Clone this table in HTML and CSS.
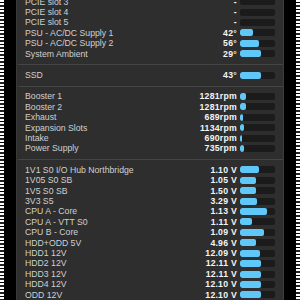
FILE: index.html
```html
<!DOCTYPE html>
<html>
<head>
<meta charset="utf-8">
<link rel="stylesheet" href="styles.css">
</head>
<body>
<div class="frame">
  <div class="edge"></div>
  <div class="gap"></div>
  <div class="panel">
    <div class="content">
      <div class="section">
        <div class="row"><span class="label">PCIE slot 3</span><span class="value">-</span><span class="bar"></span></div>
        <div class="row"><span class="label">PCIE slot 4</span><span class="value">-</span><span class="bar"></span></div>
        <div class="row"><span class="label">PCIE slot 5</span><span class="value">-</span><span class="bar"></span></div>
        <div class="row"><span class="label">PSU - AC/DC Supply 1</span><span class="value">42°</span><span class="bar"><i style="width:13px"></i></span></div>
        <div class="row"><span class="label">PSU - AC/DC Supply 2</span><span class="value">56°</span><span class="bar"><i style="width:19px"></i></span></div>
        <div class="row"><span class="label">System Ambient</span><span class="value">29°</span><span class="bar"><i style="width:20.5px"></i></span></div>
      </div>
      <div class="sep"></div>
      <div class="section">
        <div class="row"><span class="label">SSD</span><span class="value">43°</span><span class="bar"><i style="width:20.5px"></i></span></div>
      </div>
      <div class="sep"></div>
      <div class="section">
        <div class="row"><span class="label">Booster 1</span><span class="value">1281rpm</span><span class="bar"><i style="width:5.5px"></i></span></div>
        <div class="row"><span class="label">Booster 2</span><span class="value">1281rpm</span><span class="bar"><i style="width:5.5px"></i></span></div>
        <div class="row"><span class="label">Exhaust</span><span class="value">689rpm</span><span class="bar"><i style="width:3px"></i></span></div>
        <div class="row"><span class="label">Expansion Slots</span><span class="value">1134rpm</span><span class="bar"><i style="width:3.5px"></i></span></div>
        <div class="row"><span class="label">Intake</span><span class="value">690rpm</span><span class="bar"><i style="width:2px"></i></span></div>
        <div class="row"><span class="label">Power Supply</span><span class="value">735rpm</span><span class="bar"><i style="width:3.5px"></i></span></div>
      </div>
      <div class="sep"></div>
      <div class="section">
        <div class="row"><span class="label">1V1 S0 I/O Hub Northbridge</span><span class="value">1.10 V</span><span class="bar"><i style="width:18.5px"></i></span></div>
        <div class="row"><span class="label">1V05 S0 SB</span><span class="value">1.05 V</span><span class="bar"><i style="width:16.3px"></i></span></div>
        <div class="row"><span class="label">1V5 S0 SB</span><span class="value">1.50 V</span><span class="bar"><i style="width:16.3px"></i></span></div>
        <div class="row"><span class="label">3V3 S5</span><span class="value">3.29 V</span><span class="bar"><i style="width:16.7px"></i></span></div>
        <div class="row"><span class="label">CPU A - Core</span><span class="value">1.13 V</span><span class="bar"><i style="width:27px"></i></span></div>
        <div class="row"><span class="label">CPU A - VTT S0</span><span class="value">1.11 V</span><span class="bar"><i style="width:12.3px"></i></span></div>
        <div class="row"><span class="label">CPU B - Core</span><span class="value">1.09 V</span><span class="bar"><i style="width:24.3px"></i></span></div>
        <div class="row"><span class="label">HDD+ODD 5V</span><span class="value">4.96 V</span><span class="bar"><i style="width:16px"></i></span></div>
        <div class="row"><span class="label">HDD1 12V</span><span class="value">12.09 V</span><span class="bar"><i style="width:20px"></i></span></div>
        <div class="row"><span class="label">HDD2 12V</span><span class="value">12.11 V</span><span class="bar"><i style="width:21px"></i></span></div>
        <div class="row"><span class="label">HDD3 12V</span><span class="value">12.11 V</span><span class="bar"><i style="width:21px"></i></span></div>
        <div class="row"><span class="label">HDD4 12V</span><span class="value">12.10 V</span><span class="bar"><i style="width:21px"></i></span></div>
        <div class="row"><span class="label">ODD 12V</span><span class="value">12.10 V</span><span class="bar"><i style="width:21px"></i></span></div>
      </div>
    </div>
  </div>
  <div class="gap gap-r"></div>
  <div class="edge"></div>
</div>
</body>
</html>
```

FILE: styles.css
```css
html, body {
  margin: 0;
  padding: 0;
  background: #000;
  height: 300px;
  overflow: hidden;
}

.frame {
  display: flex;
  height: 300px;
  width: 300px;
}

.edge {
  width: 4px;
  flex: none;
  background: repeating-linear-gradient(180deg, #fff 0 2px, #000 2px 3px, #fff 3px 5px, #222 5px 7px);
}

.gap {
  width: 12px;
  flex: none;
  background: #000;
}

.gap-r {
  width: 12px;
}

.panel {
  width: 266px;
  flex: none;
  background: #2e2e2e;
  border-left: 1px solid #3a3a3a;
  border-right: 1px solid #3e3e3e;
  overflow: hidden;
  font-family: "Liberation Sans", Arial, sans-serif;
  font-size: 8.7px;
}

.content {
  margin-top: -3.5px;
  padding: 0 8px 0 8px;
}

.row {
  display: flex;
  align-items: center;
  height: 10.43px;
  line-height: 10.43px;
}

.label {
  flex: 1;
  color: #d0d0d0;
  white-space: nowrap;
}

.value {
  color: #f4f4f4;
  font-weight: bold;
  text-align: right;
  white-space: nowrap;
  letter-spacing: 0.25px;
}

.bar {
  width: 35px;
  height: 7px;
  margin-left: 3px;
  background: #1b1b1b;
  border-radius: 2px;
  display: flex;
  overflow: hidden;
  flex: none;
}

.bar i {
  display: block;
  height: 100%;
  background: #5fc8f9;
  border-radius: 2px;
}

.sep {
  height: 1px;
  background: #454545;
  margin: 5.3px -8px 4.6px -7px;
}
```
